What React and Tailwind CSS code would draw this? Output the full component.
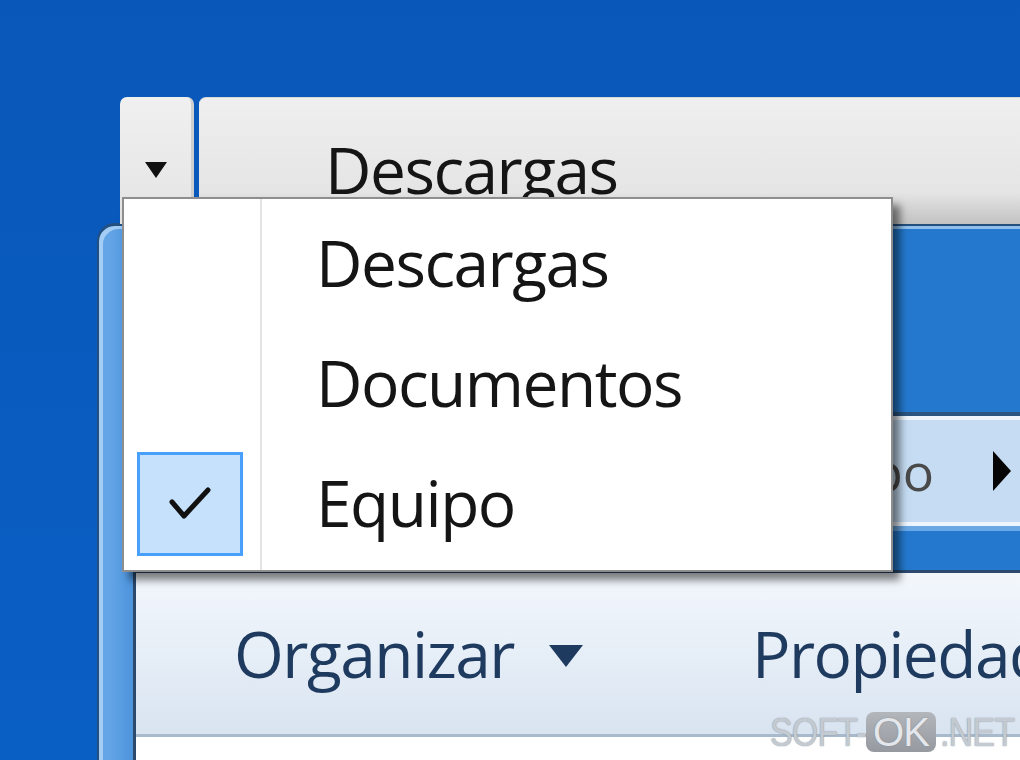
import React from 'react';

const ui = { fontFamily: '"Open Sans", "Noto Sans", sans-serif' };

function TabBar() {
  return (
    <div className="absolute left-[120px] top-[97px] right-0 h-[127px] flex">
      <div className="w-[74px] shrink-0 rounded-t-[7px] bg-linear-to-b from-[#f0f0f0] to-[#e4e4e4] border-r-[3px] border-[#cfcfcf] flex justify-center pt-[64px]">
        <svg width="24" height="18" viewBox="0 0 24 18">
          <path d="M1 1 L23 1 L12 17 Z" fill="#111" />
        </svg>
      </div>
      <div className="flex-1 ml-[5px] rounded-tl-[7px] bg-linear-to-b from-[#efefef] via-[#e5e5e5] via-75% to-[#c2c2c2] border-t border-[#d9d9d9]">
        <div className="pl-[126px] pt-[32px] text-[64px] leading-[80px] text-[#151515] tracking-[-1.5px]" style={ui}>
          Descargas
        </div>
      </div>
    </div>
  );
}

function ExplorerWindow() {
  return (
    <div className="absolute left-[97px] top-[223px] right-0 bottom-0 rounded-tl-[18px] border-l-2 border-t-[3px] border-[#24507f] bg-linear-to-r from-[#64a5e6] from-[1%] to-[#2479cf] to-[8%] shadow-[inset_4px_3px_0_rgba(190,222,250,0.7)] flex flex-col">
      <div className="h-[186px]" />
      <div className="ml-[40px] border-t-[4px] border-[#2b5581]">
        <div className="h-[110px] border-y-[4px] border-[#eef5fc] bg-[#c5dcf2] flex items-center justify-end pr-[8px]">
          <span className="text-[52px] text-[#4a4a4a] leading-none" style={ui}>Equipo</span>
          <svg className="ml-[58px] shrink-0" width="20" height="42" viewBox="0 0 20 42">
            <path d="M1 1 L19 21 L1 41 Z" fill="#050505" />
          </svg>
        </div>
        <div className="h-[5px] bg-[#6aa9e6]" />
      </div>
      <div className="h-[39px]" />
      <div className="flex-1 ml-[34px] border-l-[3px] border-t-[3px] border-[#2b4a6e] bg-white flex flex-col">
        <div className="h-[164px] bg-linear-to-b from-[#f3f7fc] via-[#e6eef7] to-[#d9e4f1] border-b-[3px] border-[#a9bacd] flex items-center pl-[98px] text-[#1e3a5e] overflow-hidden" style={ui}>
          <span className="shrink-0 text-[64px] leading-none tracking-[-1.5px]">Organizar</span>
          <svg width="36" height="24" viewBox="0 0 36 24" className="shrink-0 ml-[34px] mt-[4px]">
            <path d="M1 1 L35 1 L18 23 Z" fill="#1e3a5e" />
          </svg>
          <span className="shrink-0 ml-[168px] text-[64px] leading-none tracking-[-1.5px] whitespace-nowrap">Propiedades</span>
        </div>
        <div className="flex-1 bg-white" />
      </div>
    </div>
  );
}

function Menu() {
  const items = ['Descargas', 'Documentos', 'Equipo'];
  return (
    <div className="absolute left-[122px] top-[197px] w-[771px] h-[375px] bg-white border-2 border-[#8e8e8e] shadow-[7px_8px_8px_rgba(0,0,0,0.5)] flex py-[4px]" style={ui}>
      <div className="w-[136px] shrink-0 flex flex-col">
        {items.map((item, i) => (
          <div key={item} className="h-[120px] pl-[13px] pt-[9px]">
            {i === 2 && (
              <div className="w-[106px] h-[104px] bg-[#c6e1fb] border-[3px] border-[#49a0fb] flex items-center justify-center">
                <svg width="44" height="36" viewBox="0 0 44 36">
                  <path d="M4 16 L16 30 L40 4" fill="none" stroke="#111" strokeWidth="5" strokeLinejoin="round" strokeLinecap="round" />
                </svg>
              </div>
            )}
          </div>
        ))}
      </div>
      <div className="w-[2px] bg-[#e2e3e3] -my-[4px]" />
      <div className="w-px bg-white -my-[4px]" />
      <div className="flex-1 flex flex-col pl-[53px]">
        {items.map((item) => (
          <div key={item} className="h-[120px] flex items-center text-[64px] text-[#151515] tracking-[-1.5px] leading-none">
            {item}
          </div>
        ))}
      </div>
    </div>
  );
}

function Watermark() {
  return (
    <div className="absolute left-[770px] top-[712px] flex items-center text-[40px] leading-none text-[#c4cad2] tracking-[-1px]" style={{ fontFamily: '"Liberation Sans", Arial, sans-serif', textShadow: '0 0 1.5px #7d838b' }}>
      <span className="scale-x-[0.85] origin-left w-[96px] whitespace-nowrap">SOFT-</span>
      <span className="w-[70px] h-[40px] rounded-[8px] bg-linear-to-b from-[#b3b7bc] to-[#969aa0] text-[#e4e7eb] flex items-center justify-center">OK</span>
      <span className="ml-[4px] scale-x-[0.85] origin-left whitespace-nowrap">.NET</span>
    </div>
  );
}

export default function App() {
  return (
    <div className="relative w-[1020px] h-[760px] overflow-hidden bg-linear-to-b from-[#0957b9] to-[#0a5fc4]">
      <ExplorerWindow />
      <TabBar />
      <Menu />
      <Watermark />
    </div>
  );
}
